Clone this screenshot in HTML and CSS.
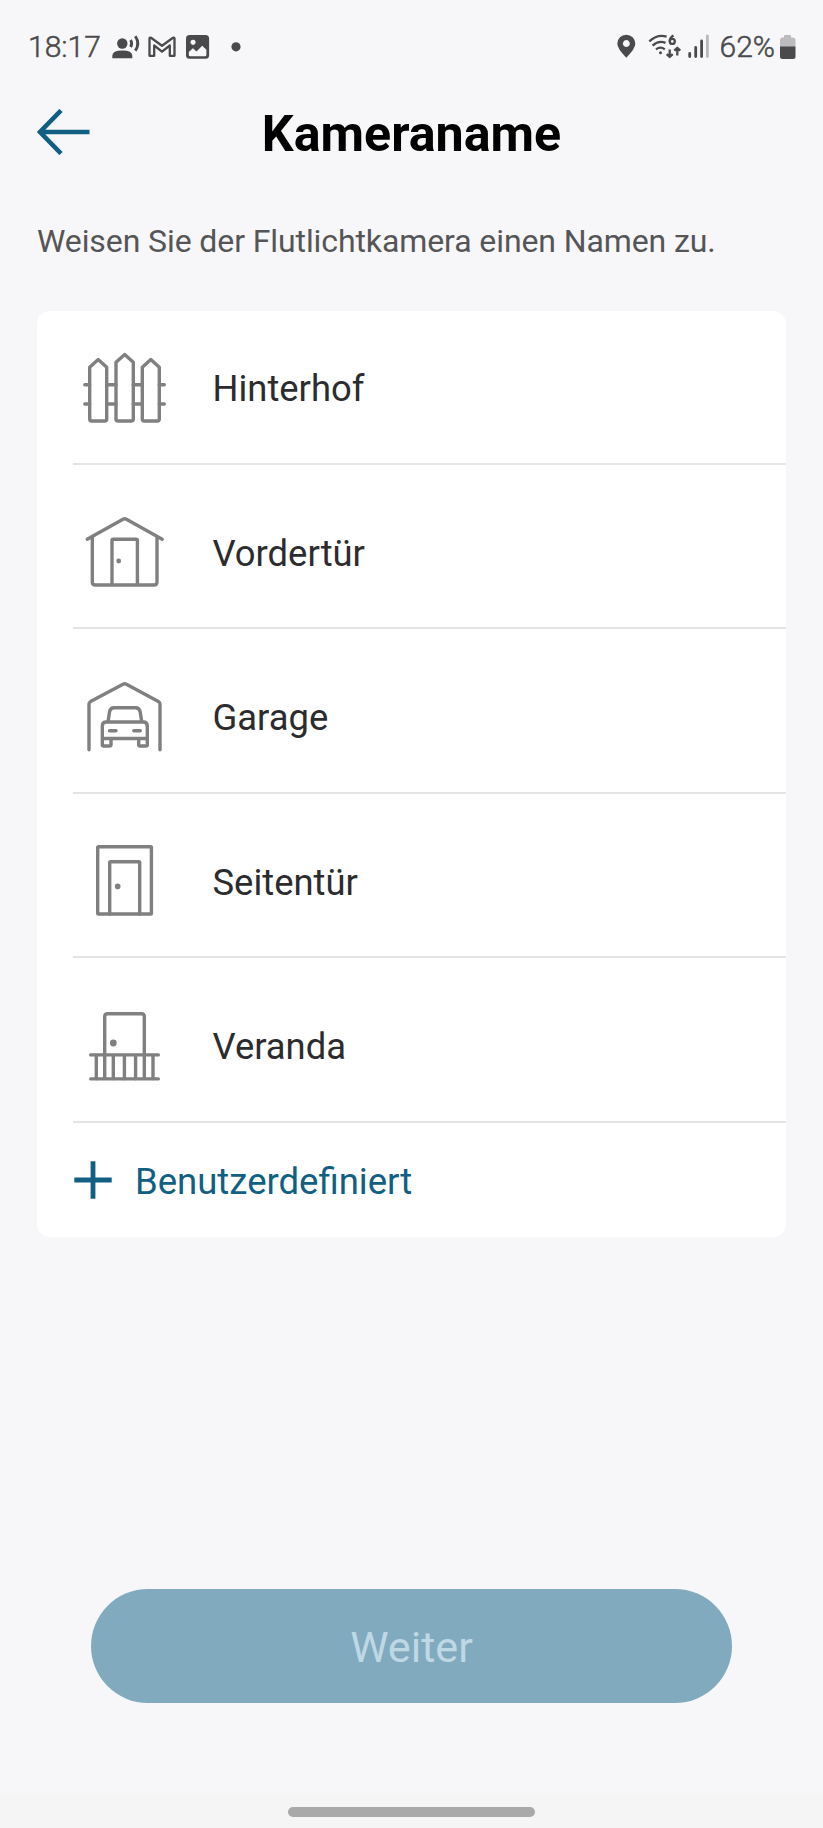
FILE: index.html
```html
<!DOCTYPE html>
<html lang="de">

<head>
  <meta charset="utf-8">
  <title>Kameraname</title>
  <link rel="stylesheet" href="styles.css">
</head>

<body>
  <div class="statusbar">
    <span class="time">18:17</span>
    <svg class="notifications" width="132" height="30" viewBox="0 0 132 30">
      <!-- voice -->
      <circle cx="12.300" cy="11.500" r="5.200" />
      <path d="M2.300 26.300v-2.500q0-5.300 10-5.300t10 5.300v2.500z" />
      <path class="line" d="M20.600 8q2.300 3.400 0 7M25.300 4.200q5 7.200 0 14.400" />
      <!-- mail -->
      <path class="line thin" d="M39.500 23.800v-17q0-1.500 1.500-1l11 8 11-8q1.500-.5 1.500 1v17h-4.700V13.500L52 19.700l-7.800-6.200v10.300z" />
      <!-- picture -->
      <path fill-rule="evenodd" d="M79.500 3h16q3.600 0 3.600 3.600v16.600q0 3.600-3.600 3.600h-16q-3.500 0-3.500-3.600V6.600Q76 3 79.500 3zM78.800 20v2.700q0 1.500 1.500 1.500h14.600q1.500 0 1.500-1.500v-5l-4.200-4-5.700 5.800-3.600-3.300zM83 7.700a2.600 2.600 0 1 0 .1 0z" />
      <circle cx="126" cy="14.800" r="4.600" />
    </svg>
    <svg class="system" width="94" height="30" viewBox="0 0 94 30">
      <!-- location -->
      <path fill-rule="evenodd" d="M11.300 2.700a9 9 0 0 1 9 9q0 4.800-9 14-9-9.200-9-14a9 9 0 0 1 9-9zM11.300 8.100a3.500 3.500 0 1 0 .1 0z" />
      <!-- wifi -->
      <path class="line thin" d="M34.300 9.300q8.300-7.600 17.300-4.700M37.500 13.600q6.500-5.800 13-2.700M41 17.400q4.500-3.500 8.800 0" />
      <circle cx="45.500" cy="20.800" r="1.500" />
      <path class="line thin" d="M58.500 3.600q-3.800 2-3.800 6" />
      <circle class="line thin" cx="57.300" cy="9.400" r="2.500" />
      <path class="line thin" d="M54.700 17.500v7.300m-3-2.600 3 2.800 3-2.800M62.300 23.500v-7.700m-3 2.800 3-2.800 3 2.800" />
      <!-- signal -->
      <path class="bars" d="M74.700 21.500v3M80.700 15.500v9M86.600 9v15.500" />
      <path class="bars faint" d="M92.400 4v20.500" />
    </svg>
    <span class="percent">62%</span>
    <svg class="battery" width="18" height="26" viewBox="0 0 18 26">
      <path class="level-empty" d="M1 13V6q0-2.500 2.500-2.500H5V2q0-1 1-1h5q1 0 1 1v1.500h1.500Q16.500 3.500 16.500 6v7z" />
      <path d="M1 12.500h15.500v10q0 2.500-2.500 2.500H3.500Q1 25 1 22.500z" />
    </svg>
  </div>

  <header class="header">
    <svg class="back" width="54" height="46" viewBox="0 0 54 46">
      <path d="M25 1.500 4 23l21 21.500M4 23h49.500" />
    </svg>
    <h1>Kameraname</h1>
  </header>

  <main>
    <p class="intro">Weisen Sie der Flutlichtkamera einen Namen zu.</p>

    <div class="card">
      <ul class="names">
        <li>
          <svg class="icon" viewBox="0 0 88 88">
            <path d="M9.700 23.300 18.200 15.600l8.500 7.700V75q0 2-2 2h-13q-2 0-2-2zM36 18.300l8.700-7.700 8.600 7.700V75q0 2-2 2H38q-2 0-2-2zM62.300 23.300l8.500-7.700 8.500 7.700V75q0 2-2 2h-13q-2 0-2-2z" />
            <path d="M4.800 40.700h4.900M26.700 40.700H36M53.300 40.700h9M79.300 40.700h5M4.800 60h4.900M26.700 60H36M53.300 60h9M79.300 60h5" />
          </svg>
          <span>Hinterhof</span>
        </li>
        <li>
          <svg class="icon" viewBox="0 0 88 88">
            <path d="M7.200 31.200 43 11.200q1.700-1 3.400 0l35.800 20M12.300 29v45q0 3 3 3H74q3 0 3-3V29M32 77V32.500q0-1.200 1.200-1.200h23q1.200 0 1.200 1.200V77" />
            <circle class="knob" cx="38.700" cy="53" r="2.400" />
          </svg>
          <span>Vordertür</span>
        </li>
        <li>
          <svg class="icon" viewBox="0 0 88 88">
            <path d="M9 76.700V31q0-1.500 1.500-2.400L43 11.200q1.700-1 3.400 0l32 17.400Q80 29.500 80 31v45.700" />
            <path d="M28 49l1.500-10q.7-4.200 4.500-4.200h21.700q3.800 0 4.500 4.200l1.600 10M26.300 49H63.300q4 0 4 4v12.500h-45V53q0-4 4-4zM22.300 65.500v6q0 1.500 1.500 1.500h5.700q1.500 0 1.500-1.500v-6M58.700 65.500v6q0 1.500 1.500 1.500h5.600q1.500 0 1.500-1.500v-6M29.500 57.800H36M53.800 57.800h6.500" />
          </svg>
          <span>Garage</span>
        </li>
        <li>
          <svg class="icon" viewBox="0 0 88 88">
            <rect x="17.700" y="9.700" width="53.700" height="67.300" rx=".8" />
            <path d="M29.700 77V25.500q0-.8.8-.8h28.400q.8 0 .8.800V77" />
            <circle class="knob" cx="37.700" cy="49.400" r="2.800" />
          </svg>
          <span>Seitentür</span>
        </li>
        <li>
          <svg class="icon" viewBox="0 0 88 88">
            <path d="M24.700 76.500V14.700q0-2.900 2.900-2.900h33.800q2.900 0 2.900 2.900v61.800M10.700 52.900h67.600M10.700 76.900h67.600M16.300 53v24M33.300 53v24M44.400 53v24M55.600 53v24M73 53v24" />
            <circle class="knob" cx="33.300" cy="41" r="3.400" />
          </svg>
          <span>Veranda</span>
        </li>
      </ul>
      <div class="custom">
        <svg width="38" height="38" viewBox="0 0 38 38">
          <path d="M19 .3v37.400M.3 19h37.400" />
        </svg>
        <span>Benutzerdefiniert</span>
      </div>
    </div>
  </main>

  <button class="next" disabled>Weiter</button>

  <div class="navbar">
    <div class="handle"></div>
  </div>
</body>

</html>
```

FILE: styles.css
```css
* {
  box-sizing: border-box;
}

body {
  display: flex;
  flex-direction: column;
  margin: 0;
  height: 1828px;
  background: #f7f7f9;
  color: #2c2c2e;
  font-family: Roboto, sans-serif;
}

svg {
  display: block;
  flex: none;
}

/* status bar */
.statusbar {
  display: flex;
  align-items: center;
  height: 93px;
  padding: 0 26px 0 28px;
  color: #4a4a4c;
  font-size: 30px;
  font-weight: 300;
  -webkit-text-stroke: 0.5px #4a4a4c;
}

.statusbar svg {
  fill: #4a4a4c;
}

.statusbar .line {
  fill: none;
  stroke: #4a4a4c;
  stroke-width: 2.8px;
  stroke-linejoin: round;
}

.statusbar .thin {
  stroke-width: 2.3px;
}

.time {
  width: 82px;
}

.system {
  margin-left: auto;
}

.bars {
  stroke: #4a4a4c;
  stroke-width: 2.8px;
  stroke-linecap: round;
}

.faint {
  stroke: #b9b9bb;
}

.percent {
  margin: 0 4px 0 11px;
}

.battery .level-empty {
  fill: #bcbcbe;
}

/* header */
.header {
  display: grid;
  grid-template-columns: 54px 1fr 54px;
  align-items: center;
  height: 80px;
  padding: 0 36px;
}

.back {
  margin-top: -3px;
  fill: none;
  stroke: #115f83;
  stroke-width: 4.6px;
}

h1 {
  margin: 0;
  padding-top: 2px;
  color: #000;
  font-size: 50.2px;
  font-weight: 700;
  line-height: 60px;
  text-align: center;
}

main {
  flex: 1;
  padding: 49px 37px 0;
}

.intro {
  margin: 0 0 51px;
  color: #555557;
  font-size: 32px;
  line-height: 38px;
  letter-spacing: -0.1px;
}

/* name list */
.card {
  height: 926px;
  border-radius: 13px;
  background: #fff;
}

.names {
  display: flex;
  flex-direction: column;
  gap: 11.6px;
  margin: 0;
  padding: 0.6px 0 0 36px;
  list-style: none;
}

.names li {
  display: flex;
  align-items: center;
  gap: 44.5px;
  height: 153px;
  padding: 1px 0 0 7px;
  border-bottom: 2px solid #e4e4e5;
  font-size: 36.4px;
}

.names span,
.custom span {
  padding-top: 2px;
}

.icon {
  width: 88px;
  height: 88px;
  fill: none;
  stroke: #808080;
  stroke-width: 3.4px;
  stroke-linecap: round;
  stroke-linejoin: round;
}

.icon .knob {
  fill: #808080;
  stroke: none;
}

.custom {
  display: flex;
  align-items: center;
  gap: 23px;
  height: 115px;
  padding-left: 37px;
  color: #115f83;
  font-size: 36.5px;
}

.custom svg {
  stroke: #115f83;
  stroke-width: 4.8px;
}

/* footer */
.next {
  align-self: center;
  width: 641px;
  height: 114px;
  margin-bottom: 90px;
  padding: 2px 0 0;
  border: 0;
  border-radius: 57px;
  background: #82aabf;
  color: #bfd8e5;
  font-family: inherit;
  font-size: 43.2px;
}

.navbar {
  display: flex;
  justify-content: center;
  height: 35px;
  padding-top: 14px;
  background: #f5f5f5;
}

.handle {
  width: 247px;
  height: 10px;
  border-radius: 5px;
  background: #a9a9a9;
}
```
